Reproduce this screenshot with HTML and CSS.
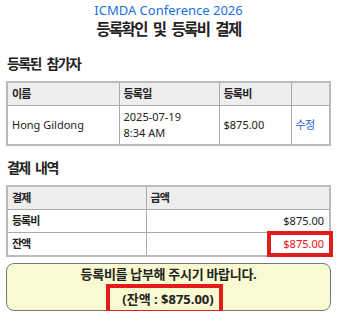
FILE: index.html
```html
<!DOCTYPE html>
<html lang="ko">
<head>
  <meta charset="UTF-8" />
  <meta name="viewport" content="width=device-width, initial-scale=1.0"/>
  <title>ICMDA Conference 2026 | 등록확인 및 등록비 결제</title>
  <link rel="stylesheet" href="styles.css">
</head>
<body>
  <div class="page">
    <div class="conf-name">ICMDA Conference 2026</div>
    <h1>등록확인 및 등록비 결제</h1>

    <h2>등록된 참가자</h2>
    <table class="grid">
      <colgroup><col class="w-name"><col class="w-date"><col class="w-fee"><col></colgroup>
      <thead>
        <tr><th>이름</th><th>등록일</th><th>등록비</th><th></th></tr>
      </thead>
      <tbody>
        <tr>
          <td>Hong Gildong</td>
          <td>2025-07-19<br>8:34 AM</td>
          <td>$875.00</td>
          <td><a href="#" class="edit">수정</a></td>
        </tr>
      </tbody>
    </table>

    <h2>결제 내역</h2>
    <table class="grid">
      <colgroup><col class="w-item"><col></colgroup>
      <thead>
        <tr><th>결제</th><th>금액</th></tr>
      </thead>
      <tbody>
        <tr><td class="label">등록비</td><td class="amount">$875.00</td></tr>
        <tr><td class="label">잔액</td><td class="amount"><span class="mark balance">$875.00</span></td></tr>
      </tbody>
    </table>

    <div class="notice">
      <div class="notice-line">등록비를 납부해 주시기 바랍니다.</div>
      <div class="notice-due"><span class="mark">(잔액 : $875.00)</span></div>
    </div>
  </div>
</body>
</html>
```
FILE: styles.css
```css
body { font-family: "Noto Sans", "Noto Sans CJK KR", sans-serif; margin: 0; padding: 0 7px 0 6px; color: #222; background: #fff; font-size: 11px; }
.page { padding-top: 1px; }
.conf-name { text-align: center; color: #1a6fe6; font-size: 13px; line-height: 18px; }
h1 { text-align: center; font-size: 15.5px; letter-spacing: -1.6px; word-spacing: 3.5px; line-height: 20px; margin: 0 0 15px; }
h2 { font-size: 14px; letter-spacing: -1.6px; word-spacing: 3.5px; line-height: 20px; margin: 0 0 7px 1px; }
.grid { width: 100%; table-layout: fixed; border-collapse: collapse; border: 2px solid #bbb; margin-bottom: 12px; }
.grid th, .grid td { border: 1px solid #aaa; padding: 3px 4px; text-align: left; line-height: 16px; vertical-align: middle; }
.grid th { background: #eee; letter-spacing: -0.8px; }
.w-name { width: 112px; }
.w-date { width: 100px; }
.w-fee { width: 72px; }
.w-item { width: 139px; }
.label { font-weight: bold; letter-spacing: -1px; }
.grid .amount { text-align: right; padding-right: 5px; }
.edit { color: #1a5fd0; text-decoration: none; letter-spacing: -0.5px; }
.mark { display: inline-block; border: 4px solid #e21b1b; padding: 0 5px 0 12px; line-height: 18px; }
.balance { color: #f01010; vertical-align: top; margin: -5px -9px -5px 0; }
.notice { background: #fafad2; border: 1px solid #777; border-radius: 8px; text-align: center; font-weight: bold; font-size: 13px; margin-top: -6px; padding-top: 1px; }
.notice-line { line-height: 18px; letter-spacing: -0.3px; margin-bottom: 1px; }
.notice-due { display: flex; justify-content: center; }
.notice-due .mark { line-height: 22px; margin: 0 8px -4px 0; }
```
